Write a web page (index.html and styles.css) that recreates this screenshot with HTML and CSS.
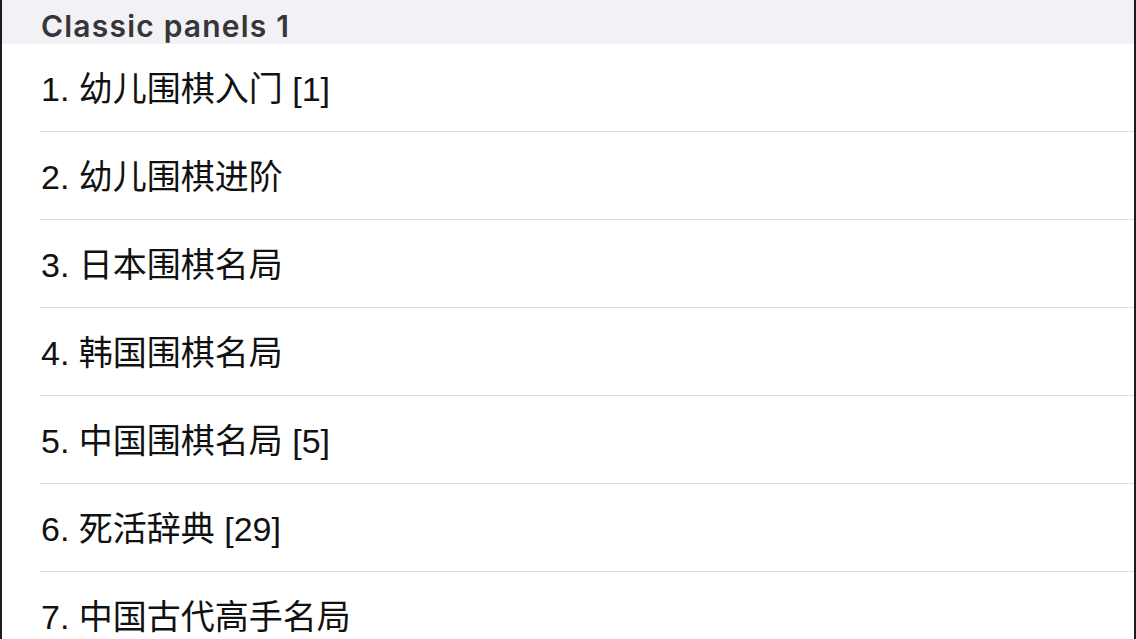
FILE: index.html
```html
<!DOCTYPE html>
<html lang="zh-CN">
<head>
    <meta charset="UTF-8">
    <meta name="viewport" content="width=device-width, initial-scale=1.0">
    <title>Classic panels</title>
    <link rel="stylesheet" href="styles.css">
</head>
<body>

<div class="screen">
    <div class="section-header">Classic panels 1</div>
    <ul class="panel-list">
        <li class="panel-item">1. 幼儿围棋入门 [1]</li>
        <li class="panel-item">2. 幼儿围棋进阶</li>
        <li class="panel-item">3. 日本围棋名局</li>
        <li class="panel-item">4. 韩国围棋名局</li>
        <li class="panel-item">5. 中国围棋名局 [5]</li>
        <li class="panel-item">6. 死活辞典 [29]</li>
        <li class="panel-item">7. 中国古代高手名局</li>
    </ul>
</div>

</body>
</html>
```

FILE: styles.css
```css
body {
    margin: 0;
    padding: 0;
    background: #ffffff;
    font-family: 'Inter', 'Noto Sans CJK SC', sans-serif;
    overflow: hidden;
}

.screen {
    height: 639px;
    overflow: hidden;
    border-left: 2px solid #1c1c1c;
    border-right: 2px solid #1c1c1c;
    box-sizing: border-box;
}

.section-header {
    height: 44px;
    display: flex;
    align-items: flex-end;
    padding: 0 0 3px 39px;
    box-sizing: border-box;
    background-color: #f2f1f6;
    color: #363638;
    font-size: 30px;
    font-weight: 600;
    line-height: 1;
    letter-spacing: 1.2px;
    overflow: hidden;
}

.panel-list {
    list-style: none;
    margin: 0;
    padding: 0 0 0 38px;
}

.panel-item {
    height: 88px;
    display: flex;
    align-items: center;
    padding: 0 0 3px 1px;
    box-sizing: border-box;
    border-bottom: 1px solid #dcdcdf;
    font-family: 'Liberation Sans', 'Noto Sans CJK SC', sans-serif;
    font-size: 34px;
    color: #111111;
}
```
